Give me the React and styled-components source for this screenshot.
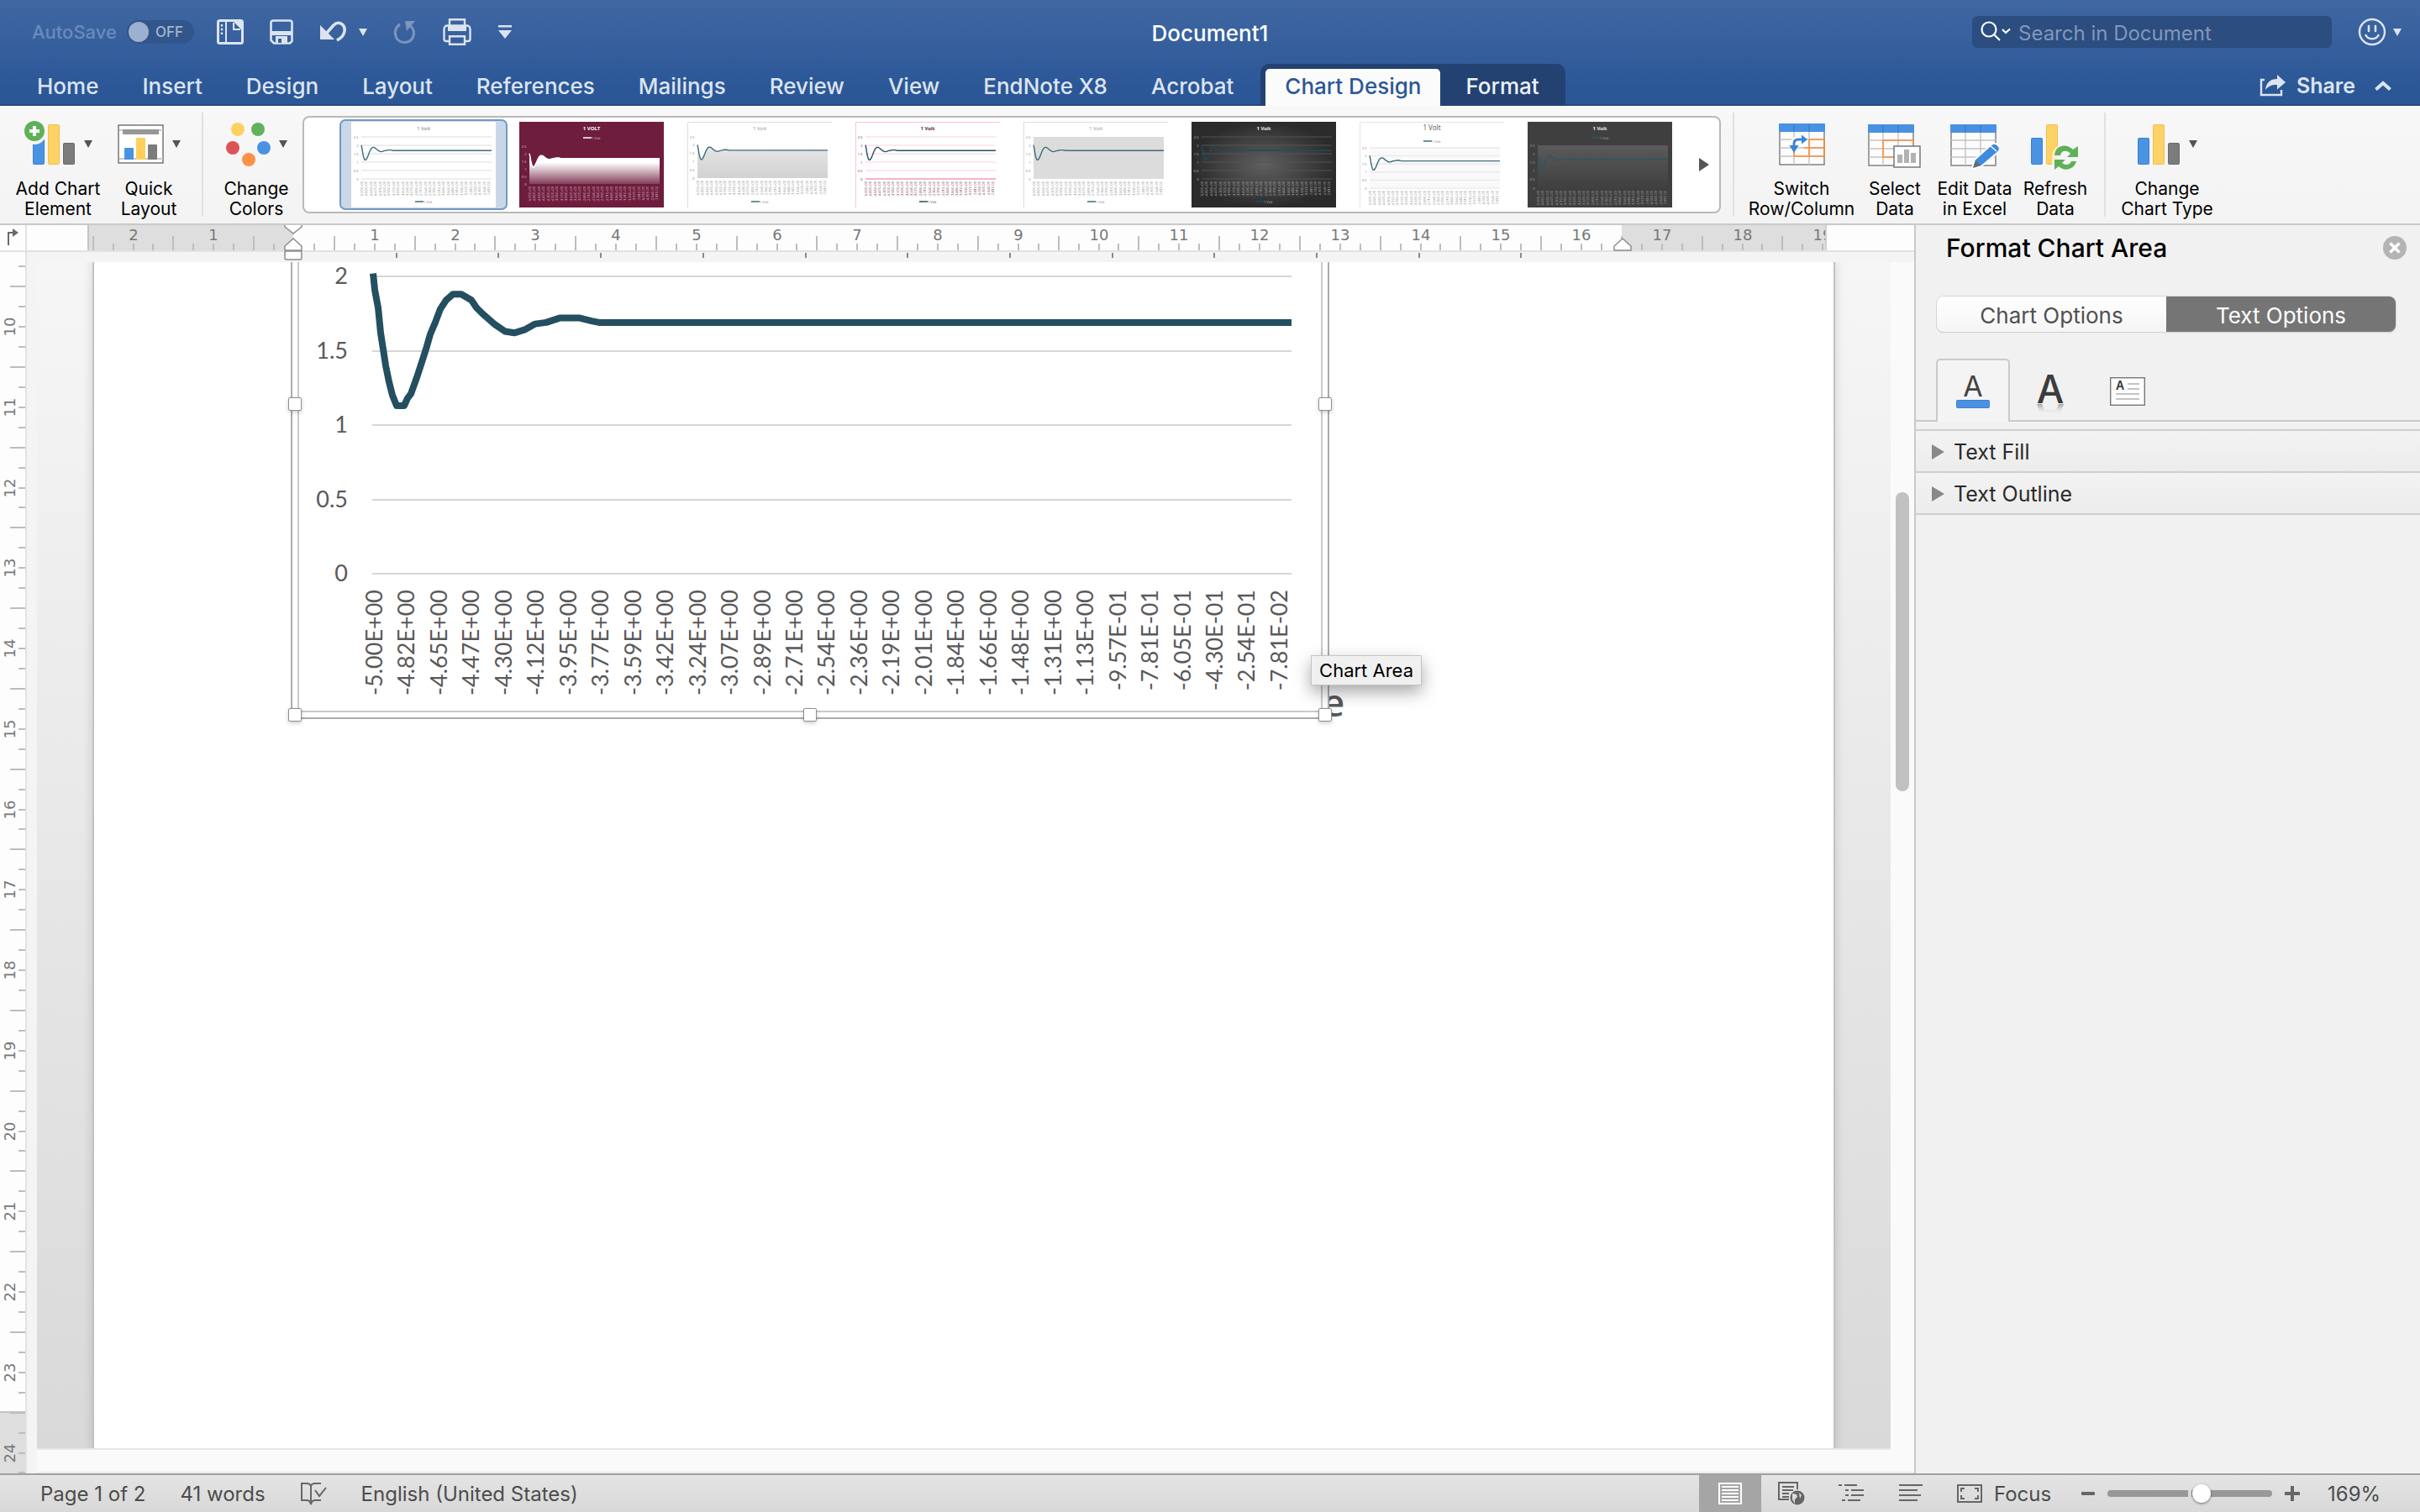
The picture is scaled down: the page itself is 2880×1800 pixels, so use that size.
import React, { useState } from 'react';
import styled, { createGlobalStyle, css } from 'styled-components';

const UI = `Inter, "Liberation Sans", sans-serif`;
const DOC = `"Noto Sans", "Liberation Sans", sans-serif`;
const CHART = `Lato, "Liberation Sans", sans-serif`;
const RULER = `"DejaVu Sans", "Liberation Sans", sans-serif`;

const TABS = ['Home', 'Insert', 'Design', 'Layout', 'References', 'Mailings', 'Review', 'View', 'EndNote X8', 'Acrobat'];

const CATEGORIES = [
  '-5.00E+00', '-4.82E+00', '-4.65E+00', '-4.47E+00', '-4.30E+00', '-4.12E+00', '-3.95E+00', '-3.77E+00',
  '-3.59E+00', '-3.42E+00', '-3.24E+00', '-3.07E+00', '-2.89E+00', '-2.71E+00', '-2.54E+00', '-2.36E+00',
  '-2.19E+00', '-2.01E+00', '-1.84E+00', '-1.66E+00', '-1.48E+00', '-1.31E+00', '-1.13E+00', '-9.57E-01',
  '-7.81E-01', '-6.05E-01', '-4.30E-01', '-2.54E-01', '-7.81E-02',
];

// [share of the plot width in 1/1094, volts]
const WAVE = [
  [1, 2.02], [3, 1.91], [7, 1.79], [10, 1.62], [13, 1.51], [16, 1.4], [20, 1.29], [24, 1.2], [29, 1.13],
  [38, 1.13], [42, 1.18], [46, 1.21], [53, 1.32], [60, 1.44], [65, 1.53], [69, 1.61], [75, 1.69], [81, 1.78],
  [88, 1.84], [96, 1.88], [106, 1.88], [118, 1.84], [124, 1.79], [131, 1.75], [145, 1.68], [158, 1.63],
  [169, 1.62], [181, 1.64], [194, 1.68], [207, 1.69], [223, 1.72], [247, 1.72], [261, 1.7], [270, 1.69], [1094, 1.69],
];

const wavePoints = (left, width, zero, volt) =>
  WAVE.map(([x, v]) => `${(left + (x * width) / 1094).toFixed(1)},${(zero - v * volt).toFixed(1)}`).join(' ');

/* ---------- icons ---------- */

const PaneIcon = () => (
  <svg width="32" height="30" viewBox="0 0 32 30" fill="none" stroke="currentColor">
    <rect x="1.5" y="1.5" width="29" height="27" rx="2" strokeWidth="3" />
    <path d="M11 2v26" strokeWidth="2" />
    <path d="M6 6v12" strokeWidth="2.4" strokeDasharray="2.4 2.4" />
    <path d="M20 4v8h8" strokeWidth="2" />
    <path d="M20 3l9 9V2z" fill="currentColor" stroke="none" />
  </svg>
);

const SaveIcon = () => (
  <svg width="28" height="30" viewBox="0 0 28 30" fill="none" stroke="currentColor" strokeWidth="2.6">
    <path d="M4 1.5h20a2.5 2.5 0 0 1 2.5 2.5v22l-2.5 2.5H5L1.5 25V4A2.5 2.5 0 0 1 4 1.5z" />
    <path d="M2 14h24v5H2z" fill="currentColor" stroke="none" />
    <path d="M7 28v-8h14v8" fill="currentColor" stroke="none" />
    <path d="M10 23h4v5h-4z" fill="#355f9c" stroke="none" />
  </svg>
);

const UndoIcon = () => (
  <svg width="32" height="26" viewBox="0 0 32 26" fill="none">
    <path d="M1 5v17h17z" fill="currentColor" />
    <path d="M9 14L17 5c6-6 14-1 13 7-1 6-4 8-9 11" stroke="currentColor" strokeWidth="3.6" />
  </svg>
);

const RedoIcon = () => (
  <svg width="28" height="30" viewBox="0 0 28 30" fill="none">
    <path d="M8 6C-1 11 1 27 13 27.500c12 0 15-14 7-20" stroke="currentColor" strokeWidth="3.2" />
    <path d="M14 2h12l-10 12z" fill="currentColor" />
  </svg>
);

const PrintIcon = () => (
  <svg width="34" height="34" viewBox="0 0 34 34" fill="none" stroke="currentColor" strokeWidth="2.4">
    <path d="M8 10V2.200h18V10" />
    <path d="M8 28H4c-2 0-2.500-1-2.500-2.500V14c0-3 2-4.500 4-4.500h23c2 0 4 1.500 4 4.500v11.500c0 1.500-1 2.500-2.500 2.500h-4" />
    <path d="M6 10h22v6H6z" fill="currentColor" stroke="none" />
    <path d="M8 22.200h18v9.600H8z" />
  </svg>
);

const CustomizeIcon = () => (
  <svg width="18" height="18" viewBox="0 0 18 18" fill="currentColor">
    <path d="M1 1h16v2.400H1zM1 7h16l-8 10z" />
  </svg>
);

const Caret = styled.span`
  width: 0;
  height: 0;
  border: 5px solid transparent;
  border-top: 9px solid currentColor;
  border-bottom: 0;
`;

const SmileIcon = () => (
  <svg width="34" height="34" viewBox="0 0 34 34" fill="none" stroke="currentColor" strokeWidth="2.4">
    <circle cx="17" cy="17" r="15" />
    <path d="M13 10v6M21 10v6" strokeWidth="2.600" strokeLinecap="round" />
    <path d="M9 20c3 7 13 7 16 0" />
  </svg>
);

const SearchIcon = () => (
  <svg width="38" height="26" viewBox="0 0 38 26" fill="none" stroke="#fff" strokeWidth="2.200">
    <circle cx="10" cy="10" r="8.500" />
    <path d="M16 16l7 7M26 10l4 4 5-4.500" />
  </svg>
);

const ShareIcon = () => (
  <svg width="32" height="26" viewBox="0 0 32 26" fill="none">
    <path d="M6 6H2v18h24v-6" stroke="currentColor" strokeWidth="2.400" />
    <path d="M7 18C8 9 13 5 21 5V0l10 9-10 8.500V12c-6-.5-10 1-14 6z" fill="currentColor" />
  </svg>
);

const ChevronUpIcon = () => (
  <svg width="20" height="12" viewBox="0 0 20 12" fill="none" stroke="currentColor" strokeWidth="4">
    <path d="M1.500 10.500L10 3l8.500 7.500" />
  </svg>
);

const Bars = ({ x = 0 }) => (
  <g strokeWidth="1">
    <rect x={x + 0.5} y="18.500" width="13" height="31" rx="1" fill="#4a93e2" stroke="#3a82d0" />
    <rect x={x + 18.5} y="2.500" width="13" height="47" rx="1" fill="#ffd266" stroke="#ecc050" />
    <rect x={x + 36.5} y="24.500" width="13" height="25" rx="1" fill="#7c7c7c" stroke="#6a6a6a" />
  </g>
);

const AddElementIcon = () => (
  <svg width="62" height="56" viewBox="0 0 62 56">
    <g transform="translate(0 2)"><Bars x={10} /></g>
    <circle cx="12" cy="14" r="14" fill="#f6f6f6" />
    <circle cx="12" cy="12" r="12" fill="#5fb158" />
    <path d="M12 6v12M6 12h12" stroke="#fff" strokeWidth="4" />
  </svg>
);

const QuickLayoutIcon = () => (
  <svg width="56" height="48" viewBox="0 0 56 48">
    <rect x="1" y="1" width="53" height="45" fill="#fff" stroke="#6e6e6e" strokeWidth="1.400" />
    <path d="M2 7h52M2 41h52" stroke="#c8c8c8" strokeWidth="2" />
    <rect x="6" y="6" width="43" height="6" fill="#979797" />
    <rect x="8" y="28" width="11" height="14" rx="1" fill="#4a93e2" />
    <rect x="22" y="16" width="11" height="26" rx="1" fill="#ffcf5c" />
    <rect x="36" y="24" width="11" height="18" rx="1" fill="#7c7c7c" />
  </svg>
);

const ColorsIcon = () => (
  <svg width="54" height="54" viewBox="0 0 54 54">
    <circle cx="14" cy="9" r="8" fill="#fdd161" />
    <circle cx="38" cy="9" r="8" fill="#63b25b" />
    <circle cx="8" cy="31" r="8" fill="#dd5358" />
    <circle cx="45" cy="31" r="8" fill="#4a91e2" />
    <circle cx="27" cy="45" r="8" fill="#fc9146" />
  </svg>
);

const Sheet = () => (
  <>
    <rect x="1" y="1" width="53" height="48" fill="#fcfcfc" stroke="#7a7a7a" strokeWidth="1.400" />
    <path d="M1 19h53M1 29h53M1 39h53M18 10v39M36 10v39" stroke="#c4c4c4" strokeWidth="1.400" fill="none" />
    <rect width="55" height="10" rx="1" fill="#4a91e2" />
    <path d="M18 1v9M36 1v9" stroke="#3077c4" />
  </>
);

const SwitchIcon = () => (
  <svg width="55" height="50" viewBox="0 0 55 50">
    <Sheet />
    <path d="M18 39h36M30 29h24M36 19h18M54 19v20M36 19v20M18 34v5" stroke="#fb8d3d" strokeWidth="1.600" fill="none" />
    <path d="M18 27v-3q0-5 5-5h6" stroke="#fff" strokeWidth="8" fill="none" />
    <path d="M18 27v-3q0-5 5-5h6" stroke="#3b85d8" strokeWidth="3" fill="none" />
    <path d="M12.500 26h11L18 35zM27 13.500v11l7-5.500z" fill="#3b85d8" />
  </svg>
);

const SelectIcon = () => (
  <svg width="64" height="56" viewBox="0 -4 64 56">
    <Sheet />
    <path d="M54 24v-5H18v20h14" stroke="#fb8d3d" strokeWidth="1.600" fill="none" />
    <rect x="31" y="26" width="31" height="25" fill="#fdfdfd" stroke="#6e6e6e" strokeWidth="1.400" />
    <path d="M35 36h6v10h-6zM43 30h6v16h-6zM51 34h6v12h-6z" fill="#b2b2b2" />
  </svg>
);

const EditDataIcon = () => (
  <svg width="58" height="60" viewBox="0 -6 58 60">
    <Sheet />
    <path d="M26 53l3-11 20-18q4-3 8 1t0 8L37 50z" fill="#3f8bde" stroke="#fff" strokeWidth="2" />
    <path d="M27 52l3-9 6 6z" fill="#6a6a6a" />
    <path d="M47 25l8 7" stroke="#fff" strokeWidth="1.500" />
  </svg>
);

const RefreshIcon = () => (
  <svg width="58" height="64" viewBox="0 -8 58 64">
    <rect x=".5" y="16.500" width="13" height="31" rx="1" fill="#4a93e2" stroke="#3a82d0" />
    <rect x="18.500" y=".5" width="13" height="47" rx="1" fill="#ffd266" stroke="#ecc050" />
    <path d="M32 26q-7 4-7 15v7h7z" fill="#fdf0d0" />
    <path d="M28 37c1-14 16-14 22-7l6-4v13H43l4-4c-4-5-11-4-12 2z" fill="#5fb158" />
    <path d="M54 44c-3 11-15 12-21 6l-5 4V42h13l-4 4c4 3 9 3 11-2z" fill="#5fb158" />
  </svg>
);

const ChartTypeIcon = () => (
  <svg width="52" height="52" viewBox="0 0 52 52"><Bars /></svg>
);

const ProofIcon = () => (
  <svg width="32" height="28" viewBox="0 0 32 28" fill="none" stroke="#666" strokeWidth="2">
    <path d="M13 24V5q-1-3-5-3H2v20h6q4 0 5 5 1-5 5-5h7M13 5q1-3 5-3h7" />
    <path d="M18 10l5 7 8-10" />
  </svg>
);

const PrintLayoutIcon = () => (
  <svg width="28" height="26" viewBox="0 0 28 26" fill="none" stroke="#fff">
    <rect x="1" y="1" width="26" height="24" strokeWidth="2" />
    <path d="M4 5h20M4 9h20M4 13h20M4 17h20M4 21h20" strokeWidth="2" />
  </svg>
);

const WebLayoutIcon = () => (
  <svg width="32" height="28" viewBox="0 0 32 28" fill="none" stroke="#666" strokeWidth="2">
    <path d="M13 21H1V1h22v8" />
    <path d="M5 6h14M5 10h13M5 14h8M5 18h8" />
    <circle cx="23" cy="19" r="8.500" fill="#666" stroke="none" />
    <path d="M17 14l5 1 1 3-3 3 0 5-3-5zM25 13l3 3-2 4z" fill="#dcdcdc" stroke="none" />
  </svg>
);

const OutlineIcon = () => (
  <svg width="30" height="22" viewBox="0 0 30 22" stroke="#666" strokeWidth="2">
    <path d="M0 1h4M7 1h15M8 7h4M15 7h15M8 13h4M15 13h15M4 19h4M11 19h15" />
  </svg>
);

const DraftIcon = () => (
  <svg width="28" height="22" viewBox="0 0 28 22" stroke="#666" strokeWidth="2">
    <path d="M0 1h28M0 7h22M0 13h26M0 19h22" />
  </svg>
);

const FocusIcon = () => (
  <svg width="30" height="22" viewBox="0 0 30 22" fill="none" stroke="#666" strokeWidth="2">
    <rect x="1" y="1" width="28" height="20" />
    <path d="M5 9V5h4M21 5h4v4M25 13v4h-4M9 17H5v-4" />
  </svg>
);

const TextFillIcon = () => (
  <svg width="40" height="60" viewBox="0 -10 40 60">
    <text x="20" y="25" textAnchor="middle" fontSize="34" fontFamily="Inter" fill="#444">A</text>
    <rect x=".5" y="29.500" width="39" height="9" rx="1" fill="#4a91e2" stroke="#3a82d0" />
  </svg>
);

const TextEffectsIcon = () => (
  <svg width="40" height="68" viewBox="0 -13 40 68">
    <defs>
      <linearGradient id="glyphFade" x1="0" y1="0" x2="0" y2="1">
        <stop offset="0" stopColor="#999" stopOpacity=".9" />
        <stop offset="1" stopColor="#eee" stopOpacity="0" />
      </linearGradient>
    </defs>
    <text x="20" y="35" textAnchor="middle" fontSize="46" fontWeight="500" fontFamily="Inter" fill="#3c3c3c">A</text>
    <path d="M4 36h6l3 7h14l3-7h6l-4 12H8z" fill="url(#glyphFade)" />
  </svg>
);

const TextBoxIcon = () => (
  <svg width="42" height="34" viewBox="0 0 42 34" fill="none">
    <rect x=".7" y=".7" width="40.600" height="32.600" fill="#fdfdfd" stroke="#777" strokeWidth="1.400" />
    <text x="12" y="15" textAnchor="middle" fontSize="14" fontWeight="600" fontFamily="Inter" fill="#333">A</text>
    <path d="M21 8h14M21 14h14M7 20h28M7 26h28" stroke="#c4c4c4" strokeWidth="2" />
  </svg>
);

const CloseIcon = () => (
  <svg width="28" height="28" viewBox="0 0 28 28">
    <circle cx="14" cy="14" r="14" fill="#b4b4b4" />
    <path d="M8.500 8.500l11 11M19.500 8.500l-11 11" stroke="#fff" strokeWidth="3.500" />
  </svg>
);

const TabStopIcon = () => (
  <svg width="14" height="22" viewBox="0 0 14 22" fill="#6a6a6a">
    <path d="M0 20V4h6V0l7 5-7 5V6H2v14z" />
  </svg>
);

/* ---------- gallery thumbnails ---------- */

const STYLES = [
  { name: 'Style 1', bg: '#fff', ink: '#888', title: '#777', grid: '#ddd', line: '#3e6a7c' },
  { name: 'Style 2', bg: '#6f1d3d', ink: '#d9c0ca', title: '#fff', titleText: '1 VOLT', bold: true, line: '#fff', legendTop: 19, top: 29, zero: 74, area: 'fadeWhite' },
  { name: 'Style 3', bg: '#fff', edge: '#ddd', ink: '#888', title: '#999', line: '#3e6a7c', zero: 67, area: 'fadeGrey' },
  { name: 'Style 4', bg: '#fff', edge: '#f9c3d0', ink: '#6f3048', title: '#5c1f37', bold: true, grid: '#fbd0da', axis: '#f5b5c5', line: '#244f60' },
  { name: 'Style 5', bg: '#fff', edge: '#ddd', ink: '#888', title: '#999', line: '#3e6a7c', plot: '#dcdcdc' },
  { name: 'Style 6', bg: 'url(#spot)', ink: '#bbb', title: '#eee', bold: true, grid: '#555', line: '#1f4c60' },
  { name: 'Style 7', bg: '#fff', edge: '#e4e4e4', ink: '#888', title: '#666', titleSize: 8, grid: '#e2e2e2', minor: '#f1f1f1', line: '#3e6a7c', legendTop: 23, top: 31, zero: 79 },
  { name: 'Style 8', bg: '#3f3f3f', ink: '#aaa', title: '#eee', bold: true, line: '#2b5568', legendTop: 19, top: 28, zero: 79, plot: 'url(#panel)' },
];

function Thumb({ look }) {
  const { top = 18, zero = 68, legendTop = 95 } = look;
  const volt = (zero - top) / 2.5;
  const points = wavePoints(12, 155, zero, volt);
  return (
    <svg width="172" height="102" viewBox="0 0 172 102" fontFamily="Noto Sans">
      <rect width="172" height="102" fill={look.bg} />
      {look.edge && <path d="M.5 102V.5H172" stroke={look.edge} fill="none" />}
      {look.plot && <rect x="12" y={top} width="155" height={zero - top} fill={look.plot} />}
      {look.minor && Array.from({ length: 25 }, (_, i) => (
        <path key={i} d={`M12 ${top + (i * (zero - top)) / 25}H167`} stroke={look.minor} strokeWidth=".8" />
      ))}
      {look.grid && [0, 0.5, 1, 1.5, 2, 2.5].map((v) => (
        <path key={v} d={`M12 ${zero - v * volt}H167`} stroke={look.grid} />
      ))}
      {look.area && <polygon points={`${points} 167,${zero} 12,${zero}`} fill={`url(#${look.area})`} />}
      {look.axis && <path d={`M12 ${zero}H167`} stroke={look.axis} strokeWidth="2" />}
      <polyline points={points} fill="none" stroke={look.line} strokeWidth="1.400" />
      <text x="86" y="10" textAnchor="middle" fontSize={look.titleSize || 6} fontWeight={look.bold ? 700 : 400} fill={look.title}>
        {look.titleText || '1 Volt'}
      </text>
      <g fill={look.ink} fontSize="4">
        {[0, 0.5, 1, 1.5, 2, 2.5].map((v) => (
          <text key={v} x="8.500" y={zero - v * volt + 1.5} textAnchor="end">{v}</text>
        ))}
        {CATEGORIES.map((label, i) => (
          <text key={label} transform={`translate(${14 + i * 5.4} ${zero + 3}) rotate(-90)`} textAnchor="end">{label}</text>
        ))}
        <path d={`M76 ${legendTop}h10`} stroke={look.line} strokeWidth="1.500" />
        <text x="86" y={legendTop + 1.5}>1 Volt</text>
      </g>
    </svg>
  );
}

const ThumbPaints = () => (
  <defs>
    <linearGradient id="fadeWhite" x1="0" y1="0" x2="0" y2="1">
      <stop offset=".3" stopColor="#fff" />
      <stop offset="1" stopColor="#fff" stopOpacity=".15" />
    </linearGradient>
    <linearGradient id="fadeGrey" x1="0" y1="0" x2="0" y2="1">
      <stop offset="0" stopColor="#e6e6e6" />
      <stop offset="1" stopColor="#d2d2d2" />
    </linearGradient>
    <linearGradient id="panel" x1="0" y1="0" x2="0" y2="1">
      <stop offset="0" stopColor="#5a5a5a" />
      <stop offset="1" stopColor="#404040" />
    </linearGradient>
    <radialGradient id="spot">
      <stop offset="0" stopColor="#606060" />
      <stop offset="1" stopColor="#2b2b2b" />
    </radialGradient>
  </defs>
);

/* ---------- rulers ---------- */

const CM = 95.75;

const range = (from, to) => Array.from({ length: to - from + 1 }, (_, i) => from + i);

function TopRuler() {
  const zero = 318;
  return (
    <TopRulerSvg>
      <rect width="100%" height="30" fill="#fdfdfd" />
      <rect x="72" width="245" height="30" fill="#dedede" />
      <rect x="72" width="2" height="30" fill="#c4c4c4" />
      <rect x="1898" width="243" height="30" fill="#dedede" />
      {range(-10, 76).filter((q) => q !== 0).map((q) => {
        const half = Math.abs(q % 4) === 2;
        return <rect key={q} x={Math.round(zero + (q * CM) / 4) - 1} y={half ? 13 : 22} width="2" height={half ? 17 : 8} fill="#bdbdbd" />;
      })}
      {[-2, -1, ...range(1, 19)].map((n) => (
        <text key={n} x={Math.round(zero + n * CM)} y="18" textAnchor="middle">{Math.abs(n)}</text>
      ))}
      <rect x="2141" width="100%" height="30" fill="#fdfdfd" />
      <rect x="2140" width="2" height="30" fill="#cfcfcf" />
      <rect y="30" width="100%" height="2" fill="#e2e2e2" />
      <rect y="32" width="100%" height="12" fill="#f4f4f4" />
      {range(1, 12).map((n) => (
        <rect key={n} x={Math.round(zero + n * 121.7) - 1} y="33" width="2" height="6" fill="#8a8a8a" />
      ))}
      <g fill="#fff" stroke="#8c8c8c" strokeWidth="1.500">
        <path d="M307 0v2l10 8 10-8V0M317 16l10 9v5h-20v-5z" />
        <rect x="307" y="31" width="20" height="10" rx="2" />
        <path d="M1899 16l10 9v5h-20v-5z" />
      </g>
    </TopRulerSvg>
  );
}

function SideRuler() {
  const ten = 89;
  return (
    <SideRulerSvg>
      <rect y="1380" width="30" height="100%" fill="#dedede" />
      <rect y="1380" width="30" height="2" fill="#c4c4c4" />
      {range(-3, 58).map((q) => {
        const half = Math.abs(q % 4) === 2;
        return <rect key={q} x={half ? 12 : 22} y={Math.round(ten + (q * CM) / 4) - 1} width={half ? 18 : 8} height="2" fill="#bdbdbd" />;
      })}
      {range(10, 24).map((n) => (
        <text key={n} textAnchor="middle" transform={`translate(18 ${Math.round(ten + (n - 10) * CM)}) rotate(-90)`}>{n}</text>
      ))}
      <rect x="30" width="2" height="100%" fill="#e2e2e2" />
    </SideRulerSvg>
  );
}

/* ---------- chart in the document ---------- */

function Chart() {
  const left = 87;
  const width = 1094;
  const zero = 371;
  const volt = 177;
  return (
    <ChartSvg viewBox="0 0 1216 534" role="img" aria-label="1 Volt">
      {[0, 0.5, 1, 1.5, 2].map((v) => (
        <g key={v}>
          <rect x={left} y={Math.round(zero - v * volt) - 1} width={width} height="2" fill="#d6d6d6" />
          <text x="58" y={Math.round(zero - v * volt) + 9} textAnchor="end">{v}</text>
        </g>
      ))}
      <polyline points={wavePoints(left, width, zero, volt)} fill="none" stroke="#244f60" strokeWidth="8" strokeLinejoin="round" />
      {CATEGORIES.map((label, i) => (
        <text key={label} textAnchor="end" transform={`translate(${Math.round(99 + i * 38.46)} 390) rotate(-90)`}>{label}</text>
      ))}
    </ChartSvg>
  );
}

export default function App() {
  const [tab, setTab] = useState('Chart Design');
  const [zoom, setZoom] = useState(58);

  return (
    <Window>
      <GlobalStyle />
      <Header>
        <TitleBar>
          <QuickAccess>
            <AutoSave>
              AutoSave
              <Toggle type="button" role="switch" aria-checked="false"><Knob />OFF</Toggle>
            </AutoSave>
            <PlainButton aria-label="Sidebar"><PaneIcon /></PlainButton>
            <PlainButton aria-label="Save"><SaveIcon /></PlainButton>
            <PlainButton aria-label="Undo"><UndoIcon /><Caret /></PlainButton>
            <PlainButton aria-label="Redo" disabled><RedoIcon /></PlainButton>
            <PlainButton aria-label="Print"><PrintIcon /></PlainButton>
            <PlainButton aria-label="Customize toolbar"><CustomizeIcon /></PlainButton>
          </QuickAccess>
          <DocTitle>Document1</DocTitle>
          <TitleRight>
            <SearchBox>
              <SearchIcon />
              <SearchInput type="text" placeholder="Search in Document" aria-label="Search in Document" />
            </SearchBox>
            <PlainButton aria-label="Feedback"><SmileIcon /><Caret /></PlainButton>
          </TitleRight>
        </TitleBar>
        <TabBar>
          {TABS.map((name) => (
            <Tab key={name} type="button" onClick={() => setTab(name)}>{name}</Tab>
          ))}
          <ContextTabs>
            <ContextTab type="button" $active={tab === 'Chart Design'} onClick={() => setTab('Chart Design')}>Chart Design</ContextTab>
            <ContextTab type="button" $active={tab === 'Format'} onClick={() => setTab('Format')}>Format</ContextTab>
          </ContextTabs>
          <Share>
            <PlainButton><ShareIcon />Share</PlainButton>
            <PlainButton aria-label="Collapse ribbon"><ChevronUpIcon /></PlainButton>
          </Share>
        </TabBar>
      </Header>

      <Ribbon>
        <RibbonButton $width={118}><IconSlot><AddElementIcon /><Caret /></IconSlot>Add Chart<br />Element</RibbonButton>
        <RibbonButton $width={98}><IconSlot><QuickLayoutIcon /><Caret /></IconSlot>Quick<br />Layout</RibbonButton>
        <Separator />
        <RibbonButton $width={102}><IconSlot><ColorsIcon /><Caret /></IconSlot>Change<br />Colors</RibbonButton>
        <Gallery>
          <PaintHolder><ThumbPaints /></PaintHolder>
          {STYLES.map((look, i) => (
            <GalleryItem key={look.name} type="button" aria-label={look.name} $selected={i === 0}><Thumb look={look} /></GalleryItem>
          ))}
          <GalleryNext type="button" aria-label="More styles"><RightArrow /></GalleryNext>
        </Gallery>
        <Separator />
        <RibbonButton $width={136}><IconSlot><SwitchIcon /></IconSlot>Switch<br />Row/Column</RibbonButton>
        <RibbonButton $width={86}><IconSlot><SelectIcon /></IconSlot>Select<br />Data</RibbonButton>
        <RibbonButton $width={104}><IconSlot><EditDataIcon /></IconSlot>Edit Data<br />in Excel</RibbonButton>
        <RibbonButton $width={88}><IconSlot><RefreshIcon /></IconSlot>Refresh<br />Data</RibbonButton>
        <Separator />
        <RibbonButton $width={122}><IconSlot><ChartTypeIcon /><Caret /></IconSlot>Change<br />Chart Type</RibbonButton>
      </Ribbon>

      <Workspace>
        <SideColumn>
          <RulerCorner><TabStopIcon /></RulerCorner>
          <SideRuler />
        </SideColumn>
        <Editor>
          <TopRuler />
          <Scroller>
            <Canvas>
              <Page>
                <ChartFrame>
                  <ChartArea><Chart /></ChartArea>
                  <Handle $x="0%" $y={169} />
                  <Handle $x="100%" $y={169} />
                  <Handle $x="0%" $y={539} />
                  <Handle $x="50%" $y={539} />
                  <Handle $x="100%" $y={539} />
                  <Tooltip role="tooltip">Chart Area</Tooltip>
                </ChartFrame>
                <BodyText>e</BodyText>
              </Page>
            </Canvas>
            <ScrollTrack><ScrollThumb /></ScrollTrack>
          </Scroller>
          <BottomStrip />
        </Editor>

        <Panel>
          <PanelHead>
            <PanelTitle>Format Chart Area</PanelTitle>
            <PlainButton aria-label="Close"><CloseIcon /></PlainButton>
          </PanelHead>
          <Segmented>
            <Segment type="button">Chart Options</Segment>
            <Segment type="button" $active>Text Options</Segment>
          </Segmented>
          <IconTabs>
            <IconTab type="button" aria-label="Text Fill and Outline" $active><TextFillIcon /></IconTab>
            <IconTab type="button" aria-label="Text Effects"><TextEffectsIcon /></IconTab>
            <IconTab type="button" aria-label="Text Box"><TextBoxIcon /></IconTab>
          </IconTabs>
          <Sections>
            <Section type="button"><Disclosure />Text Fill</Section>
            <Section type="button"><Disclosure />Text Outline</Section>
          </Sections>
        </Panel>
      </Workspace>

      <StatusBar>
        <StatusText>Page 1 of 2</StatusText>
        <StatusText>41 words</StatusText>
        <PlainButton aria-label="Proofing"><ProofIcon /></PlainButton>
        <StatusText>English (United States)</StatusText>
        <Views>
          <ViewButton type="button" aria-label="Print Layout" $active><PrintLayoutIcon /></ViewButton>
          <ViewButton type="button" aria-label="Web Layout"><WebLayoutIcon /></ViewButton>
          <ViewButton type="button" aria-label="Outline"><OutlineIcon /></ViewButton>
          <ViewButton type="button" aria-label="Draft"><DraftIcon /></ViewButton>
          <FocusButton type="button"><FocusIcon />Focus</FocusButton>
          <ZoomStep type="button" aria-label="Zoom out"><Dash /></ZoomStep>
          <ZoomSlider type="range" aria-label="Zoom" value={zoom} onChange={(e) => setZoom(e.target.value)} />
          <ZoomStep type="button" aria-label="Zoom in"><Plus /></ZoomStep>
          <ZoomValue>169%</ZoomValue>
        </Views>
      </StatusBar>
    </Window>
  );
}

/* ---------- styles ---------- */

const GlobalStyle = createGlobalStyle`
  * { box-sizing: border-box; }
  body { margin: 0; font-family: ${UI}; }
  button, input { font: inherit; color: inherit; }
  svg { display: block; flex: none; }
`;

const Window = styled.div`
  display: flex;
  flex-direction: column;
  height: 100vh;
  overflow: hidden;
  background: #f4f4f4;
`;

const Header = styled.header`
  flex: none;
  color: #dce4f0;
  background: linear-gradient(#4067a2, #2b5797 85%);
`;

const TitleBar = styled.div`
  display: grid;
  grid-template-columns: 1fr auto 1fr;
  align-items: center;
  height: 76px;
`;

const PlainButton = styled.button`
  display: flex;
  align-items: center;
  gap: 12px;
  padding: 0;
  border: 0;
  background: none;
  &:disabled { opacity: 0.4; }
`;

const QuickAccess = styled.div`
  display: flex;
  align-items: center;
  gap: 31px;
  padding-left: 38px;
  ${PlainButton} { gap: 15px; }
`;

const AutoSave = styled.div`
  display: flex;
  align-items: center;
  gap: 12px;
  margin-right: -4px;
  font-size: 22px;
  font-weight: 500;
  color: #6b8bbb;
`;

const Toggle = styled.button`
  display: flex;
  align-items: center;
  gap: 8px;
  width: 80px;
  height: 28px;
  padding: 0 2px;
  border: 0;
  border-radius: 14px;
  background: #32568a;
  font-size: 17px;
  color: #a5b5d0;
`;

const Knob = styled.span`
  width: 24px;
  height: 24px;
  border-radius: 50%;
  background: #9cb0d2;
`;

const DocTitle = styled.div`
  padding-top: 3px;
  font-size: 26px;
  font-weight: 500;
  color: #fff;
`;

const TitleRight = styled.div`
  display: flex;
  align-items: center;
  justify-content: flex-end;
  gap: 31px;
  padding-right: 22px;
  ${PlainButton} { gap: 8px; }
`;

const SearchBox = styled.label`
  display: flex;
  align-items: center;
  gap: 6px;
  width: 428px;
  height: 38px;
  padding: 0 10px;
  border-radius: 6px;
  background: #2b4d7f;
`;

const SearchInput = styled.input`
  flex: 1;
  min-width: 0;
  padding: 2px 1px 0;
  border: 0;
  outline: 0;
  background: none;
  font-size: 24px;
  &::placeholder { color: #8297bb; opacity: 1; }
`;

const TabBar = styled.nav`
  display: flex;
  height: 50px;
  padding-left: 18px;
  box-shadow: inset 0 -2px #27497f;
`;

const Tab = styled.button`
  padding: 3px 26px 0;
  border: 0;
  background: none;
  font-size: 26px;
  font-weight: 500;
  white-space: nowrap;
`;

const ContextTabs = styled.div`
  display: flex;
  margin-left: 6px;
  padding: 0 6px;
  border-radius: 10px 10px 0 0;
  background: #234272;
`;

const ContextTab = styled(Tab)`
  margin-top: 6px;
  padding: 0 23px 3px;
  border-radius: 5px 5px 0 0;
  ${({ $active }) => $active ? css`
    color: #2b5797;
    background: #fbfbfb;
  ` : css`
    padding: 0 25px 3px 30px;
    color: #eef2f8;
  `}
`;

const Share = styled.div`
  display: flex;
  gap: 23px;
  margin-left: auto;
  padding: 2px 34px 0 0;
  font-size: 25px;
  font-weight: 600;
`;

const Ribbon = styled.div`
  display: flex;
  align-items: center;
  flex: none;
  height: 142px;
  padding: 0 10px;
  border-bottom: 2px solid #c9c9c9;
  background: linear-gradient(#f8f8f8, #f3f3f3);
`;

const RibbonButton = styled.button`
  flex: none;
  width: ${({ $width }) => $width}px;
  height: 130px;
  padding: 6px 0 0;
  border: 0;
  background: none;
  font-size: 21px;
  line-height: 24px;
  white-space: nowrap;
  color: #000;
`;

const IconSlot = styled.span`
  display: flex;
  align-items: center;
  justify-content: center;
  gap: 9px;
  height: 68px;
  margin-bottom: 7px;
  ${Caret} { color: #555; }
`;

const Separator = styled.div`
  flex: none;
  width: 2px;
  height: 124px;
  margin: 0 12px 0 14px;
  background: #e0e0e0;
`;

const Gallery = styled.div`
  display: flex;
  align-items: center;
  flex: 0 1 1688px;
  min-width: 0;
  height: 116px;
  margin-left: 4px;
  padding-left: 42px;
  border: 2px solid #b9b9b9;
  border-radius: 8px;
  background: #fff;
  overflow: hidden;
`;

const PaintHolder = styled.svg`
  width: 0;
  height: 0;
`;

const GalleryItem = styled.button`
  display: flex;
  align-items: center;
  justify-content: center;
  flex: none;
  width: 200px;
  height: 108px;
  padding: 0;
  border: 2px solid ${({ $selected }) => ($selected ? '#7398c8' : 'transparent')};
  border-radius: 7px;
  background: ${({ $selected }) => ($selected ? '#c9d7e9' : 'none')};
`;

const GalleryNext = styled.button`
  display: flex;
  align-items: center;
  justify-content: center;
  flex: 1;
  height: 100%;
  padding: 0 0 0 5px;
  border: 0;
  background: none;
`;

const RightArrow = styled.span`
  border: 8px solid transparent;
  border-left: 12px solid #555;
  border-right: 0;
`;

const Workspace = styled.main`
  display: flex;
  flex: 1;
  min-height: 0;
`;

const SideColumn = styled.div`
  display: flex;
  flex-direction: column;
  flex: none;
  width: 32px;
`;

const RulerCorner = styled.div`
  flex: none;
  height: 32px;
  padding: 4px 0 0 9px;
  border: solid #e2e2e2;
  border-width: 0 2px 2px 0;
  background: #fdfdfd;
`;

const rulerText = css`
  overflow: hidden;
  text {
    font-family: ${RULER};
    font-size: 18px;
    fill: #777;
  }
`;

const SideRulerSvg = styled.svg`
  width: 32px;
  flex: 1;
  min-height: 0;
  background: #fdfdfd;
  ${rulerText}
`;

const TopRulerSvg = styled.svg`
  width: 100%;
  height: 44px;
  ${rulerText}
`;

const Editor = styled.section`
  display: flex;
  flex-direction: column;
  flex: 1;
  min-width: 0;
`;

const Scroller = styled.div`
  display: flex;
  flex: 1;
  min-height: 0;
  padding-left: 12px;
`;

const Canvas = styled.div`
  flex: 1;
  min-width: 0;
  padding: 0 68px;
  border-bottom: 2px solid #e6e6e6;
  background: linear-gradient(#f6f6f6, #d9d9d9);
`;

const Page = styled.article`
  display: flex;
  align-items: flex-start;
  height: 100%;
  padding-left: 234px;
  background: #fff;
  box-shadow: 0 0 0 2px #c2c2c2, 0 0 12px 2px rgba(0, 0, 0, 0.15);
  clip-path: inset(0 -14px);
`;

const ChartFrame = styled.figure`
  position: relative;
  z-index: 1;
  width: 1236px;
  margin: 0;
  padding: 0 6px 6px;
  border: 2px solid #ababab;
  border-top: 0;
  background: #fff;
`;

const ChartArea = styled.div`
  border: 2px solid #cacaca;
  border-top: 0;
`;

const ChartSvg = styled.svg`
  width: 100%;
  text {
    font-family: ${CHART};
    font-size: 27px;
    fill: #595959;
  }
`;

const Handle = styled.span`
  position: absolute;
  left: clamp(3px, ${({ $x }) => $x}, 100% - 3px);
  top: ${({ $y }) => $y}px;
  width: 16px;
  height: 16px;
  margin: -8px;
  border: 1px solid #8f8f8f;
  border-radius: 2px;
  background: #fff;
  box-shadow: 0 2px 5px rgba(0, 0, 0, 0.2);
`;

const Tooltip = styled.span`
  position: absolute;
  right: -112px;
  bottom: 38px;
  z-index: 2;
  padding: 0 9px;
  border: 1px solid #c4c4c4;
  background: #f0f0f0;
  box-shadow: 0 8px 20px rgba(0, 0, 0, 0.35);
  font-size: 22px;
  line-height: 34px;
  white-space: nowrap;
  color: #000;
`;

const BodyText = styled.p`
  margin: 505px 0 0 -8px;
  font-family: ${DOC};
  font-size: 46px;
  font-weight: 500;
  line-height: 36px;
  color: #595959;
`;

const ScrollTrack = styled.div`
  flex: none;
  width: 28px;
  padding: 274px 6px 0;
  background: #fafafa;
`;

const ScrollThumb = styled.div`
  height: 356px;
  border-radius: 8px;
  background: #c1c1c1;
`;

const BottomStrip = styled.div`
  flex: none;
  height: 28px;
  margin-left: 12px;
  border-bottom: 2px solid #ececec;
  background: #fafafa;
`;

const Panel = styled.aside`
  display: flex;
  flex-direction: column;
  flex: none;
  width: 602px;
  border-left: 2px solid #c9c9c9;
  background: #f1f1f1;
`;

const PanelHead = styled.div`
  display: flex;
  align-items: center;
  justify-content: space-between;
  height: 54px;
  padding: 0 16px 0 36px;
`;

const PanelTitle = styled.h2`
  margin: 0;
  font-size: 30px;
  font-weight: 500;
  color: #000;
`;

const Segmented = styled.div`
  display: flex;
  height: 42px;
  margin: 31px 29px 0 25px;
  border-radius: 8px;
  box-shadow: 0 0 0 1px #d5d5d5, 0 1px 1px #aaa;
  overflow: hidden;
`;

const Segment = styled.button`
  flex: 1;
  padding: 2px 0 0;
  border: 0;
  font-size: 26px;
  color: ${({ $active }) => ($active ? '#fff' : '#505050')};
  background: ${({ $active }) => ($active ? '#757575' : 'linear-gradient(#fff, #f5f5f5)')};
`;

const IconTabs = styled.div`
  display: flex;
  height: 75px;
  margin-top: 32px;
  padding: 0 24px;
  box-shadow: inset 0 -2px #cacaca;
`;

const IconTab = styled.button`
  display: flex;
  align-items: center;
  justify-content: center;
  width: ${({ $active }) => ($active ? 88 : 92)}px;
  padding: 2px 0 0;
  border: 0;
  background: none;
  ${({ $active }) => $active && css`
    margin-right: 2px;
    border: solid #cacaca;
    border-width: 2px 2px 0;
    border-radius: 5px 5px 0 0;
    background: #f4f4f4;
  `}
`;

const Sections = styled.div`
  margin-top: 9px;
  border-top: 2px solid #cfcfcf;
`;

const Section = styled.button`
  display: flex;
  align-items: center;
  gap: 11px;
  width: 100%;
  height: 50px;
  padding: 2px 19px 0;
  border: 0;
  border-bottom: 2px solid #cfcfcf;
  background: linear-gradient(#f3f3f3, #ececec);
  font-size: 25px;
  color: #2a2a2a;
`;

const Disclosure = styled.span`
  border: 9px solid transparent;
  border-left: 15px solid #888;
  border-right: 0;
`;

const StatusBar = styled.footer`
  display: flex;
  align-items: center;
  flex: none;
  gap: 41px;
  height: 46px;
  padding-left: 48px;
  border-top: 2px solid #a0a0a0;
  background: linear-gradient(#e4e4e4, #d8d8d8);
  font-size: 24px;
  color: #4c4c4c;
`;

const StatusText = styled.span`
  white-space: nowrap;
`;

const Views = styled.div`
  display: flex;
  align-items: center;
  align-self: stretch;
  margin-left: auto;
  padding-right: 48px;
`;

const ViewButton = styled.button`
  display: flex;
  align-items: center;
  justify-content: center;
  align-self: stretch;
  width: ${({ $active }) => ($active ? 74 : 71)}px;
  padding: 0;
  border: 0;
  background: ${({ $active }) => ($active ? '#a5a5a5' : 'none')};
`;

const FocusButton = styled.button`
  display: flex;
  align-items: center;
  gap: 14px;
  width: 148px;
  margin-left: 20px;
  padding: 0;
  border: 0;
  background: none;
`;

const ZoomStep = styled.button`
  padding: 0;
  border: 0;
  background: none;
`;

const Dash = styled.span`
  display: block;
  width: 16px;
  height: 4px;
  border-radius: 1px;
  background: #666;
`;

const Plus = styled.span`
  display: block;
  width: 18px;
  height: 18px;
  background:
    linear-gradient(#666, #666) center / 18px 4px no-repeat,
    linear-gradient(#666, #666) center / 4px 18px no-repeat;
`;

const ZoomSlider = styled.input`
  appearance: none;
  width: 196px;
  height: 22px;
  margin: 0 15px;
  background: none;
  &::-webkit-slider-runnable-track {
    height: 8px;
    border-radius: 4px;
    background: linear-gradient(90deg, #989898 96px, #ddd 96px, #ddd 100px, #989898 100px);
  }
  &::-webkit-slider-thumb {
    appearance: none;
    width: 22px;
    height: 22px;
    margin-top: -7px;
    border-radius: 50%;
    background: #fff;
    box-shadow: 0 1px 3px rgba(0, 0, 0, 0.5);
  }
`;

const ZoomValue = styled.span`
  width: 62px;
  margin-left: 33px;
`;
